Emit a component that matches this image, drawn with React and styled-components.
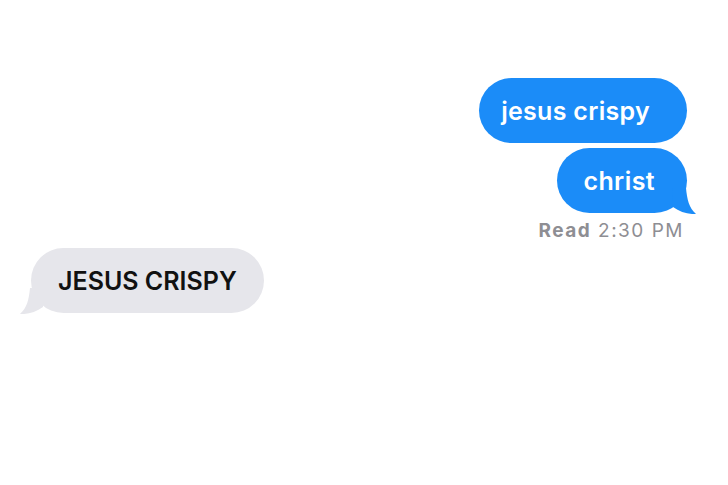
import styled, { createGlobalStyle } from 'styled-components';

const GlobalStyle = createGlobalStyle`
  html, body {
    margin: 0;
    background: #ffffff;
  }
  body {
    font-family: Inter, "Liberation Sans", Arial, sans-serif;
  }
`;

const BLUE = '#1b8cf8';
const GREY = '#e6e6eb';

const Thread = styled.div`
  width: 728px;
  height: 485px;
  box-sizing: border-box;
  padding-top: 78px;
  display: flex;
  flex-direction: column;
`;

const SentGroup = styled.div`
  display: flex;
  flex-direction: column;
  align-items: flex-end;
  gap: 5px;
  padding-right: 41px;
`;

const Bubble = styled.div`
  position: relative;
  height: 65px;
  box-sizing: border-box;
  display: flex;
  align-items: center;
  border-radius: 33px;
  padding: 0 ${(p) => p.$padRight}px 0 ${(p) => p.$padLeft}px;
  background: ${(p) => (p.$sent ? BLUE : GREY)};
  color: ${(p) => (p.$sent ? '#ffffff' : '#111111')};
  font-size: 25px;
  font-weight: 600;
  letter-spacing: ${(p) => p.$spacing || 0}px;
  white-space: nowrap;
`;

const Tail = styled.svg`
  position: absolute;
  bottom: -1px;
  width: 24px;
  height: 26px;
  ${(p) =>
    p.$side === 'right'
      ? 'right: -9px;'
      : 'left: -11px; transform: scaleX(-1);'}
`;

const ReadReceipt = styled.div`
  margin: 7px 44px 0 0;
  align-self: flex-end;
  font-size: 19px;
  line-height: 22px;
  color: #8e8e93;
  letter-spacing: 1.5px;

  b {
    font-weight: 700;
  }
`;

const ReceivedGroup = styled.div`
  display: flex;
  flex-direction: column;
  align-items: flex-start;
  margin-top: 6px;
  padding-left: 31px;
`;

const BubbleTail = ({ side, color }) => (
  <Tail $side={side} viewBox="0 0 24 26">
    <path
      d="M0 0 H14 C15 11 17 20 24 26 C16 26.5 8 24 1 19 Z"
      fill={color}
    />
  </Tail>
);

const App = () => {
  return (
    <>
      <GlobalStyle />
      <Thread>
        <SentGroup>
          <Bubble $sent $padLeft={22} $padRight={37} $spacing={0.3}>
            jesus crispy
          </Bubble>
          <Bubble $sent $padLeft={26} $padRight={32} $spacing={0.4}>
            christ
            <BubbleTail side="right" color={BLUE} />
          </Bubble>
        </SentGroup>
        <ReadReceipt>
          <b>Read</b> 2:30 PM
        </ReadReceipt>
        <ReceivedGroup>
          <Bubble $padLeft={27} $padRight={27}>
            JESUS CRISPY
            <BubbleTail side="left" color={GREY} />
          </Bubble>
        </ReceivedGroup>
      </Thread>
    </>
  );
};

export default App;
